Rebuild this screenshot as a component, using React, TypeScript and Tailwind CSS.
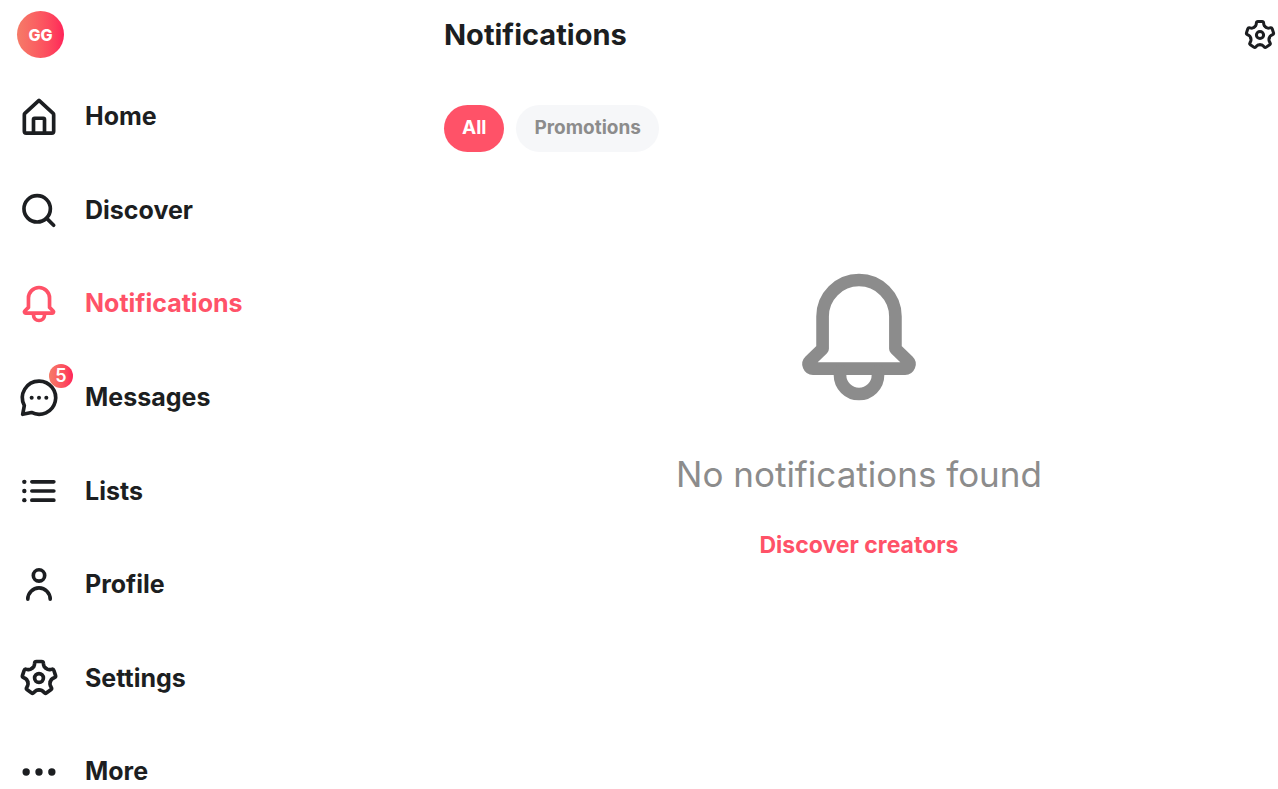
import React from "react";

interface IconProps {
  className?: string;
  children: React.ReactNode;
}

function Icon({ className = "size-11", children }: IconProps) {
  return (
    <svg
      viewBox="0 0 24 24"
      fill="none"
      stroke="currentColor"
      strokeWidth="2"
      strokeLinecap="round"
      strokeLinejoin="round"
      aria-hidden="true"
      className={`shrink-0 ${className}`}
    >
      {children}
    </svg>
  );
}

function HomeShape() {
  return (
    <>
      <path d="M12 2.9 4.3 10a1 1 0 0 0-.3.8v9a1 1 0 0 0 1 1h14a1 1 0 0 0 1-1v-9a1 1 0 0 0-.3-.8Z" />
      <path d="M9 20.8v-7.5a.6.6 0 0 1 .6-.6h4.8a.6.6 0 0 1 .6.6v7.5" />
    </>
  );
}

function SearchShape() {
  return (
    <>
      <circle cx="11" cy="10.8" r="7.2" />
      <path d="m16.2 16 3.8 3.8" />
    </>
  );
}

function BellShape() {
  return (
    <>
      <path d="M12 3a5.75 5.75 0 0 0-5.75 5.75v5.1l-2 1.95a.7.7 0 0 0 .5 1.2h14.5a.7.7 0 0 0 .5-1.2l-2-1.95v-5.1A5.75 5.75 0 0 0 12 3Z" />
      <path d="M9 17.4V18a3 3 0 0 0 6 0v-.6" />
    </>
  );
}

function ChatShape() {
  return (
    <>
      <path d="M12 2.8a9.05 9.05 0 1 1-4.1 17.1l-4.8 1 .9-4.8A9.05 9.05 0 0 1 12 2.8Z" />
      <g fill="currentColor" stroke="none">
        <circle cx="8" cy="11.9" r="1.1" />
        <circle cx="12" cy="11.9" r="1.1" />
        <circle cx="16" cy="11.9" r="1.1" />
      </g>
    </>
  );
}

function ListShape() {
  return (
    <>
      <path d="M8.1 7h12M8.1 12h12M8.1 17h12" />
      <g fill="currentColor" stroke="none">
        <circle cx="4" cy="7" r="1.2" />
        <circle cx="4" cy="12" r="1.2" />
        <circle cx="4" cy="17" r="1.2" />
      </g>
    </>
  );
}

function UserShape() {
  return (
    <>
      <circle cx="12" cy="6.8" r="3.1" />
      <path d="M5.9 19.7a6.1 6.1 0 0 1 12.2 0" />
    </>
  );
}

// one tooth, repeated every 72 degrees
const tooth =
  "M-3.82-5.26C-3.1-5.78-2.65-6.2-2.55-7L-2.4-8.1Q-2.3-9-1.4-9H1.4Q2.3-9 2.4-8.1L2.55-7C2.65-6.2 3.1-5.78 3.82-5.26";

function GearShape() {
  return (
    <g transform="translate(12 12)">
      {[0, 72, 144, 216, 288].map((angle) => (
        <path key={angle} d={tooth} transform={`rotate(${angle})`} />
      ))}
      <circle r="2.4" />
    </g>
  );
}

function MoreShape() {
  return (
    <g fill="currentColor" stroke="none">
      <circle cx="5" cy="12" r="2" />
      <circle cx="12" cy="12" r="2" />
      <circle cx="19" cy="12" r="2" />
    </g>
  );
}

const links = [
  { label: "Home", shape: <HomeShape /> },
  { label: "Discover", shape: <SearchShape /> },
  { label: "Notifications", shape: <BellShape />, active: true },
  { label: "Messages", shape: <ChatShape />, count: 5 },
  { label: "Lists", shape: <ListShape /> },
  { label: "Profile", shape: <UserShape /> },
  { label: "Settings", shape: <GearShape /> },
  { label: "More", shape: <MoreShape /> },
];

function Sidebar() {
  return (
    <aside className="flex w-[440px] shrink-0 flex-col pb-px pl-[17px] pt-[11px]">
      <a
        href="#"
        className="flex size-[47px] items-center justify-center rounded-full bg-linear-to-r from-[#f57b68] to-[#ff2259] text-base font-extrabold text-white"
      >
        GG
      </a>
      <nav className="mt-[43px] flex flex-1 flex-col justify-between">
        {links.map((link) => (
          <a
            key={link.label}
            href="#"
            className={`flex h-8 items-center gap-6 text-[25px] font-bold ${
              link.active ? "text-[#ff5268]" : "text-[#1c1e21]"
            }`}
          >
            <span className="relative">
              <Icon>{link.shape}</Icon>
              {link.count && (
                <span className="absolute -top-3 left-8 flex size-6 items-center justify-center rounded-full bg-linear-to-r from-[#f57b68] to-[#ff2259] text-lg font-semibold text-white">
                  {link.count}
                </span>
              )}
            </span>
            {link.label}
          </a>
        ))}
      </nav>
    </aside>
  );
}

function App() {
  return (
    <div className="flex min-h-screen overflow-hidden bg-white font-['Inter',sans-serif] text-[#1c1e21]">
      <Sidebar />
      <main className="flex-1">
        <header className="flex h-[70px] items-center justify-between pl-1">
          <h1 className="text-[29px] font-bold">Notifications</h1>
          <button aria-label="Notification settings">
            <Icon className="size-9">
              <GearShape />
            </Icon>
          </button>
        </header>
        <div className="mt-[35px] flex gap-3 pl-1 text-[19px] font-bold">
          <button className="h-[47px] rounded-full bg-[#ff5268] px-[18px] text-white">All</button>
          <button className="h-[47px] rounded-full bg-[#f6f7f9] px-[18px] text-[#8c8c8c]">
            Promotions
          </button>
        </div>
        <section className="mt-[109px] flex flex-col items-center">
          <Icon className="size-[152px] text-[#8c8c8c]">
            <BellShape />
          </Icon>
          <p className="mt-[36px] text-[35px] leading-[50px] text-[#8c8c8c]">
            No notifications found
          </p>
          <a href="#" className="mt-[31px] text-[23px] leading-[30px] font-bold text-[#ff5268]">
            Discover creators
          </a>
        </section>
      </main>
    </div>
  );
}

export default App;
